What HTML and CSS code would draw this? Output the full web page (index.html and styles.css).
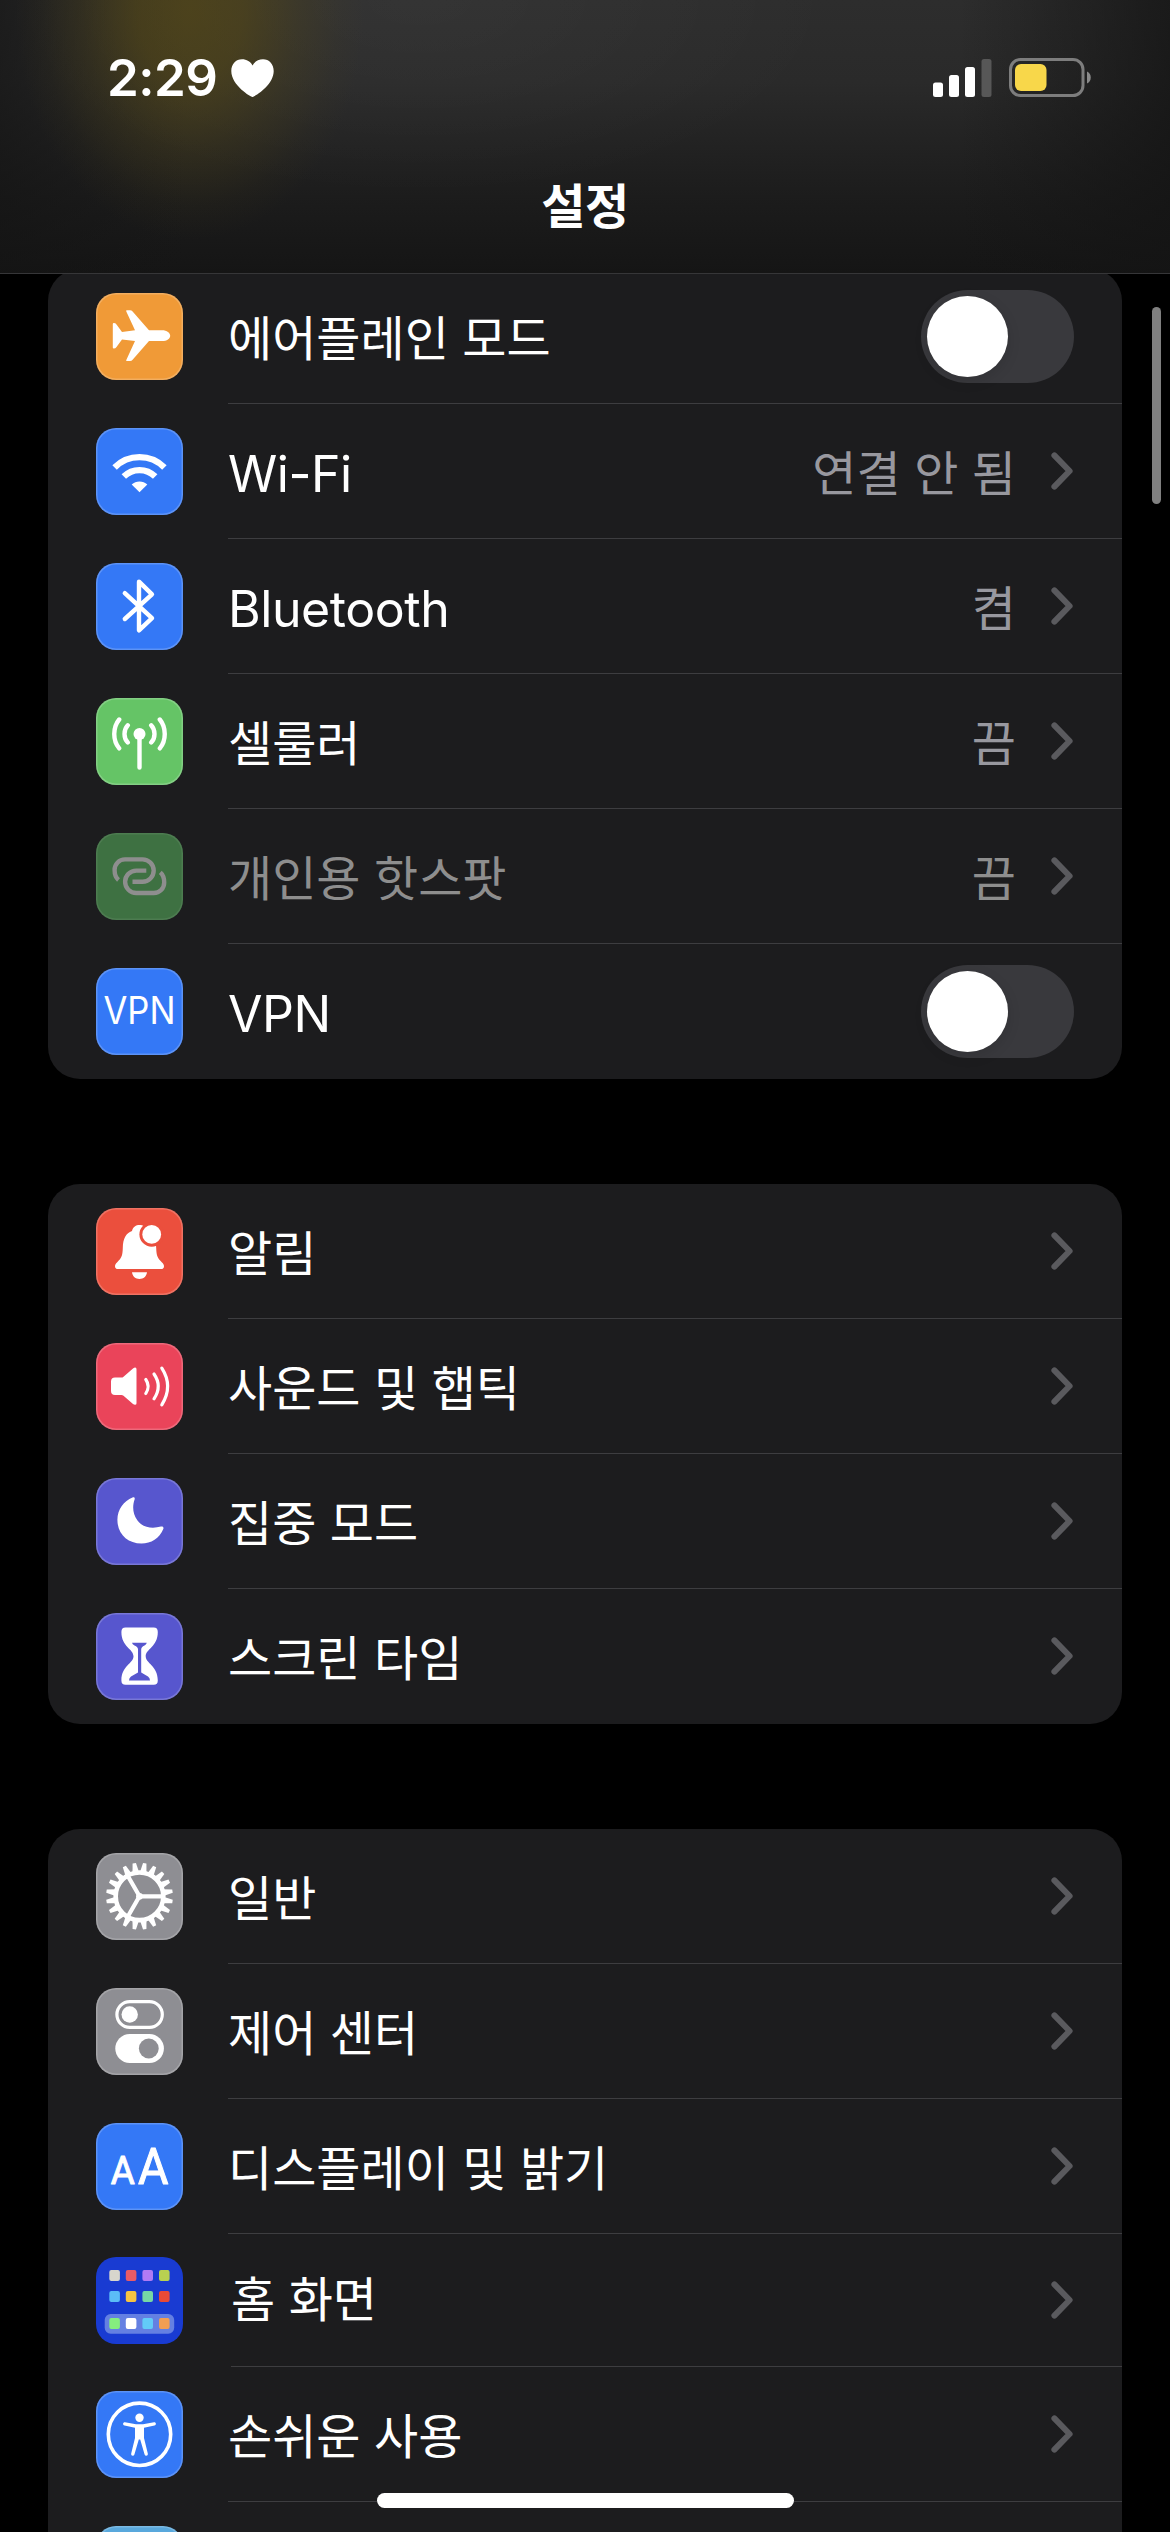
FILE: index.html
```
<!DOCTYPE html>
<html lang="ko">
<head>
<meta charset="utf-8">
<title>설정</title>
<link rel="stylesheet" href="styles.css">
</head>
<body>
<svg class="defs" width="0" height="0">
  <symbol id="chevron" viewBox="0 0 24 40"><path d="M4.4 4.400 19.600 20 4.400 35.600" fill="none" stroke="#5a5a5e" stroke-width="6" stroke-linecap="round" stroke-linejoin="round"/></symbol>
  <path id="tooth" d="M-3.2-24.5-1.7-33.4H1.7L3.2-24.5Z"/>
</svg>
<div class="screen">
  <header class="topbar">
    <div class="status">
      <span class="time">2:29</span>
      <svg class="heart" width="43" height="38" viewBox="0 0 43 38"><path d="M21.5 38C20 38 .3 26.500.3 12 .3 5 5 .3 11 .3c4.600 0 8.500 2.300 10.500 6.200C23.500 2.600 27.400.3 32 .3c6 0 10.700 4.700 10.700 11.700C42.700 26.500 23 38 21.500 38Z" fill="#fff"/></svg>
      <svg class="signal" width="59" height="38" viewBox="0 0 59 38"><g fill="#fff"><rect y="23.500" width="10" height="14.500" rx="2.500"/><rect x="16" y="16" width="10" height="22" rx="2.500"/><rect x="32" y="8" width="10" height="30" rx="2.500"/></g><rect x="48.500" width="10" height="38" rx="2.500" fill="#575757"/></svg>
      <svg class="battery" width="83" height="39" viewBox="0 0 83 39"><rect x="1.500" y="1.500" width="72.500" height="36" rx="10" fill="none" stroke="#7d7d7d" stroke-width="3"/><rect x="6" y="6" width="31.500" height="27" rx="6" fill="#f8d74a"/><path d="M78 13.500c5 1.800 5 10.200 0 12Z" fill="#8a8a8a"/></svg>
    </div>
    <h1 class="title">설정</h1>
  </header>

  <main class="list">
    <section class="card first">
      <div class="row">
        <svg class="icon orange" viewBox="0 0 87 87"><path fill="#fff" d="M30.500 17.300H34q1.600 0 2.600 1.300L53 37.300H66c5 0 8.200 2.700 8.200 5.400S71 48.100 66 48.100H53L36.600 66.800Q35.600 68.100 34 68.100H30.500Q30 68 30.300 66.900L39 48.100 26 46.500 20.500 54Q19.500 55.500 17.800 55.500q-1 0-1-1V31q0-1 1-1 1.700 0 2.700 1.400L26 39 39 37.300 30.300 18.500q-.3-1 .2-1.200Z"/></svg>
        <div class="body"><span class="label">에어플레인 모드</span><span class="toggle"></span></div>
      </div>
      <div class="row">
        <svg class="icon blue" viewBox="0 0 87 87"><g fill="none" stroke="#fff" stroke-width="6.300"><path d="M18.600 39.400A35.200 35.200 0 0 1 68.400 39.400"/><path d="M27.800 48.600A22.200 22.200 0 0 1 59.200 48.600"/></g><path fill="#fff" d="M43.500 64.300 35.700 56.500A11.300 11.300 0 0 1 51.300 56.500Z"/></svg>
        <div class="body"><span class="label latin">Wi-Fi</span><span class="value">연결 안 됨</span><svg class="chev"><use href="#chevron"/></svg></div>
      </div>
      <div class="row">
        <svg class="icon blue" viewBox="0 0 87 87"><path d="M28.800 30.200 56 55.200 43 67.300V18.700L56 31.300 28.800 56" fill="none" stroke="#fff" stroke-width="4.400" stroke-linecap="round" stroke-linejoin="round"/></svg>
        <div class="body"><span class="label latin">Bluetooth</span><span class="value">켬</span><svg class="chev"><use href="#chevron"/></svg></div>
      </div>
      <div class="row">
        <svg class="icon green" viewBox="0 0 87 87"><g fill="none" stroke="#fff" stroke-width="4.400" stroke-linecap="round"><path d="M43.500 36V69.500M23.200 21.500C16.600 29.500 16.600 42.500 23.200 50.300M31.800 27.300C27.400 32 27.400 40 31.800 44.500M63.800 21.500C70.400 29.500 70.400 42.500 63.800 50.300M55.200 27.300C59.600 32 59.600 40 55.200 44.500"/></g><circle cx="43.500" cy="36" r="6" fill="#fff"/></svg>
        <div class="body"><span class="label">셀룰러</span><span class="value">끔</span><svg class="chev"><use href="#chevron"/></svg></div>
      </div>
      <div class="row disabled">
        <svg class="icon dimgreen" viewBox="0 0 87 87"><g fill="none" stroke="#8e8e8e" stroke-width="4.400"><path id="link" d="M22.500 47C19 44 18.600 40 18.600 37 18.600 31 23.200 26.400 29 26.400H46.500A11.200 11.200 0 0 1 46.500 48.800H36.500"/><use href="#link" transform="rotate(180 43.400 43.200)"/></g></svg>
        <div class="body"><span class="label">개인용 핫스팟</span><span class="value">끔</span><svg class="chev"><use href="#chevron"/></svg></div>
      </div>
      <div class="row">
        <svg class="icon blue" viewBox="0 0 87 87"><text class="vpn" x="7.500" y="56.300" textLength="72" lengthAdjust="spacingAndGlyphs">VPN</text></svg>
        <div class="body"><span class="label latin">VPN</span><span class="toggle"></span></div>
      </div>
    </section>

    <section class="card">
      <div class="row">
        <svg class="icon red" viewBox="0 0 87 87"><path fill="#fff" d="M22 61q-3 0-3-2.800c0-1.600.8-2.600 2-3.800C25.500 50 26.500 48 26.800 40 27 30 30 25.500 36 23 37 19 40 17.100 43.500 17.100S50 19 51 23C57 25.500 60 30 60.200 40 60.500 48 61.500 50 66 54.400 67.200 55.600 68 56.600 68 58.200Q68 61 65 61ZM36 64.300H51C50.500 68.500 47.500 71 43.500 71S36.500 68.500 36 64.300Z"/><circle cx="55.700" cy="26.400" r="12.300" fill="#eb4f3d"/><circle cx="55.700" cy="26.400" r="9.400" fill="#fff"/></svg>
        <div class="body"><span class="label">알림</span><svg class="chev"><use href="#chevron"/></svg></div>
      </div>
      <div class="row">
        <svg class="icon pink" viewBox="0 0 87 87"><path fill="#fff" d="M15 38.500Q15 34.600 19 34.600H25.500Q26.500 34.600 27.500 33.700L37 25.500Q38.200 24.600 39.200 24.600 40.500 24.700 40.500 26.200V60.300Q40.500 61.800 39 61.800 38 61.800 37 61L27.500 52.800Q26.500 51.900 25.500 51.900H19Q15 51.900 15 48Z"/><g fill="none" stroke="#fff" stroke-width="3.200" stroke-linecap="round"><path d="M49.800 36.500Q54.500 43.300 49.800 50.500M58 31Q66.500 43.300 58 55.800M65.800 25.200Q77.500 43.300 65.800 61.800"/></g></svg>
        <div class="body"><span class="label">사운드 및 햅틱</span><svg class="chev"><use href="#chevron"/></svg></div>
      </div>
      <div class="row">
        <svg class="icon indigo" viewBox="0 0 87 87"><path fill="#fff" d="M36.500 19.600C38 18.900 39.300 19.800 38.500 21.800 36.500 27.500 36.300 35.500 41.500 42.500 47 50 56.500 51 65 48.600 66.800 48.200 68 49.200 67.300 51 63.500 60.500 55 65.500 45.500 65.500 31.500 65.500 21.400 56 21.400 41.800 21.400 31.500 28 23 36.500 19.600Z"/></svg>
        <div class="body"><span class="label">집중 모드</span><svg class="chev"><use href="#chevron"/></svg></div>
      </div>
      <div class="row">
        <svg class="icon indigo" viewBox="0 0 87 87"><path fill="#fff" d="M29.500 14.600H57.700Q61.800 14.600 61.800 19C61.800 34 49.700 36 49.700 43.200S61.800 52.500 61.800 67.400Q61.800 71.800 57.700 71.800H29.500Q25.400 71.800 25.400 67.400C25.400 52.500 37.500 50.500 37.500 43.200S25.400 34 25.400 19Q25.400 14.600 29.500 14.600Z"/><path fill="#5756ce" d="M36 29.800H50.800Q50.500 31.500 48.500 32.500 45.200 34 45.200 36.500V59.500L52 63.500Q54 65 54 67.500H33Q33 65 35 63.500L42 59.500V36.500Q42 34 38.500 32.500 36.300 31.500 36 29.800Z"/></svg>
        <div class="body"><span class="label">스크린 타임</span><svg class="chev"><use href="#chevron"/></svg></div>
      </div>
    </section>

    <section class="card">
      <div class="row">
        <svg class="icon gray" viewBox="0 0 87 87"><g transform="translate(43.500 43.300)"><circle r="23.800" fill="none" stroke="#fff" stroke-width="4.600"/><path d="M0 0H23M0 0-11.500-20M0 0-11.500 20" stroke="#fff" stroke-width="4.200"/><circle r="3.400" fill="#fff"/><g fill="#fff"><use href="#tooth" transform="rotate(9)"/><use href="#tooth" transform="rotate(27)"/><use href="#tooth" transform="rotate(45)"/><use href="#tooth" transform="rotate(63)"/><use href="#tooth" transform="rotate(81)"/><use href="#tooth" transform="rotate(99)"/><use href="#tooth" transform="rotate(117)"/><use href="#tooth" transform="rotate(135)"/><use href="#tooth" transform="rotate(153)"/><use href="#tooth" transform="rotate(171)"/><use href="#tooth" transform="rotate(189)"/><use href="#tooth" transform="rotate(207)"/><use href="#tooth" transform="rotate(225)"/><use href="#tooth" transform="rotate(243)"/><use href="#tooth" transform="rotate(261)"/><use href="#tooth" transform="rotate(279)"/><use href="#tooth" transform="rotate(297)"/><use href="#tooth" transform="rotate(315)"/><use href="#tooth" transform="rotate(333)"/><use href="#tooth" transform="rotate(351)"/></g></g></svg>
        <div class="body"><span class="label">일반</span><svg class="chev"><use href="#chevron"/></svg></div>
      </div>
      <div class="row">
        <svg class="icon gray" viewBox="0 0 87 87"><rect x="20.900" y="13.600" width="45.400" height="25.800" rx="12.900" fill="none" stroke="#fff" stroke-width="3.200"/><circle cx="33.700" cy="26.500" r="8.200" fill="#fff"/><rect x="19.300" y="46" width="48.600" height="29" rx="14.500" fill="#fff"/><circle cx="52.800" cy="60.500" r="9.900" fill="#8e8e93"/></svg>
        <div class="body"><span class="label">제어 센터</span><svg class="chev"><use href="#chevron"/></svg></div>
      </div>
      <div class="row">
        <svg class="icon blue" viewBox="0 0 87 87"><text class="aa" x="14.700" y="61.300" font-size="39" textLength="24" lengthAdjust="spacingAndGlyphs">A</text><text class="aa" x="42" y="61.300" font-size="50" textLength="30.500" lengthAdjust="spacingAndGlyphs">A</text></svg>
        <div class="body"><span class="label">디스플레이 및 밝기</span><svg class="chev"><use href="#chevron"/></svg></div>
      </div>
      <div class="row home">
        <svg class="icon navy" viewBox="0 0 87 87"><rect x="8.700" y="57" width="69.500" height="19.700" rx="6" fill="#6480e2"/><g><rect x="13.300" y="13" width="10.600" height="11" rx="2" fill="#d8d6cd"/><rect x="29.800" y="13" width="10.600" height="11" rx="2" fill="#ea5b66"/><rect x="46.400" y="13" width="10.600" height="11" rx="2" fill="#b07af5"/><rect x="63" y="13" width="10.600" height="11" rx="2" fill="#b9d151"/><rect x="13.300" y="34" width="10.600" height="11" rx="2" fill="#5bbcf7"/><rect x="29.800" y="34" width="10.600" height="11" rx="2" fill="#f6c342"/><rect x="46.400" y="34" width="10.600" height="11" rx="2" fill="#76d8a5"/><rect x="63" y="34" width="10.600" height="11" rx="2" fill="#e94a36"/><rect x="13.300" y="61" width="10.600" height="11" rx="2" fill="#85ee7e"/><rect x="29.800" y="61" width="10.600" height="11" rx="2" fill="#fff"/><rect x="46.400" y="61" width="10.600" height="11" rx="2" fill="#62cbf8"/><rect x="63" y="61" width="10.600" height="11" rx="2" fill="#f29e52"/></g></svg>
        <div class="body"><span class="label">홈 화면</span><svg class="chev"><use href="#chevron"/></svg></div>
      </div>
      <div class="row">
        <svg class="icon blue" viewBox="0 0 87 87"><circle cx="43.500" cy="43.300" r="31.200" fill="none" stroke="#fff" stroke-width="3.600"/><circle cx="43.500" cy="26.700" r="4.200" fill="#fff"/><path fill="#fff" d="M29 31.200 40 33.200H47L58 31.200C60.300 31 60.600 34 58.500 34.500L48 36.700V47L51.800 62.500C52.200 65 49.500 65.500 48.600 63.500L44.200 48.500H42.800L38.400 63.500C37.500 65.500 34.800 65 35.200 62.500L39 47V36.700L28.500 34.500C26.400 34 26.700 31 29 31.200Z"/></svg>
        <div class="body"><span class="label">손쉬운 사용</span><svg class="chev"><use href="#chevron"/></svg></div>
      </div>
      <div class="row">
        <svg class="icon sky" viewBox="0 0 87 87"></svg>
        <div class="body"></div>
      </div>
    </section>
  </main>
  <div class="scrollbar"></div>
  <div class="home-indicator"></div>
</div>
</body>
</html>
```

FILE: styles.css
```
* { box-sizing: border-box; }
body { margin: 0; background: #000; }
.defs { position: absolute; }
.screen {
  position: relative;
  width: 1170px;
  height: 2532px;
  overflow: hidden;
  background: #000;
  color: #fff;
  font-family: Inter, "Noto Sans CJK KR", sans-serif;
}
.topbar {
  height: 274px;
  border-bottom: 1px solid #363638;
  background:
    radial-gradient(ellipse 175px 230px at 190px 10px, rgba(88, 74, 20, .7), rgba(88, 74, 20, .6) 30%, rgba(88, 74, 20, .26) 62%, rgba(88, 74, 20, .07) 85%, transparent),
    linear-gradient(90deg, rgba(20, 20, 20, .65), transparent 16%, transparent 82%, rgba(20, 20, 20, .75)),
    radial-gradient(ellipse 420px 200px at 420px 0, rgba(255, 255, 255, .035), transparent),
    linear-gradient(#2d2d2d, #2a2a2a 30%, #1c1c1c 72%, #151515);
}
.status {
  display: flex;
  align-items: center;
  height: 155px;
  padding: 0 78px 0 107px;
}
.time { font-size: 51px; font-weight: 600; line-height: 1; letter-spacing: -.5px; width: 124px; white-space: nowrap; }
.signal { margin-left: auto; }
.battery { margin-left: 17px; }
.title {
  margin: 17px 0 0;
  text-align: center;
  font-size: 48px;
  font-weight: 600;
  line-height: 70px;
  letter-spacing: -.5px;
}
.list {
  display: flex;
  flex-direction: column;
  gap: 105px;
  padding: 0 48px;
}
.card {
  flex: none;
  background: #1c1c1e;
  border-radius: 32px;
  overflow: hidden;
}
.first { margin-top: -5px; clip-path: inset(5px 0 0 0); }
.row {
  display: flex;
  align-items: center;
  height: 135px;
  padding-left: 48px;
}
.row.home { height: 133px; }
.icon {
  flex: none;
  width: 87px;
  height: 87px;
  border-radius: 20px;
  box-shadow: inset 0 0 0 1.500px rgba(255, 255, 255, .2);
}
.orange { background: #f09a37; }
.blue { background: #3478f6; }
.green { background: #65c466; }
.dimgreen { background: #3e7142; box-shadow: inset 0 0 0 1.500px rgba(255, 255, 255, .08); }
.red { background: #eb4f3d; }
.pink { background: #ea445a; }
.indigo { background: #5756ce; }
.gray { background: #8e8e93; }
.navy { background: #193bd2; box-shadow: none; }
.sky { background: #59a8dc; }
.body {
  flex: 1;
  display: flex;
  align-items: center;
  align-self: stretch;
  margin-left: 45px;
  padding-right: 48px;
  border-bottom: 1px solid #3d3d40;
}
.home .body { margin-left: 48px; }
.row:last-child .body { border-bottom-color: transparent; }
.label { flex: 1; padding-top: 5px; font-size: 48px; line-height: 70px; white-space: nowrap; }
.home .label { padding-top: 0; }
.latin { padding-top: 6px; font-size: 50px; letter-spacing: -.45px; }
.value { padding-top: 5px; font-size: 48px; line-height: 70px; color: #98989f; margin-right: 34px; white-space: nowrap; }
.disabled .label, .disabled .value { color: #8e8e8e; }
.chev { width: 24px; height: 40px; }
.toggle {
  width: 153px;
  height: 93px;
  padding: 6px;
  border-radius: 47px;
  background: #39393d;
}
.toggle::after {
  content: "";
  display: block;
  width: 81px;
  height: 81px;
  border-radius: 50%;
  background: #fff;
  box-shadow: 0 4px 14px rgba(0, 0, 0, .12);
}
.vpn { font: 38px Inter, sans-serif; fill: #fff; }
.aa { font-family: Roboto, sans-serif; fill: #fff; stroke: #fff; stroke-width: 1; stroke-linejoin: round; }
.scrollbar {
  position: absolute;
  left: 1152px;
  top: 307px;
  width: 9px;
  height: 197px;
  border-radius: 5px;
  background: #808080;
}
.home-indicator {
  position: absolute;
  left: 377px;
  top: 2493px;
  width: 417px;
  height: 15px;
  border-radius: 8px;
  background: #fff;
}
```
